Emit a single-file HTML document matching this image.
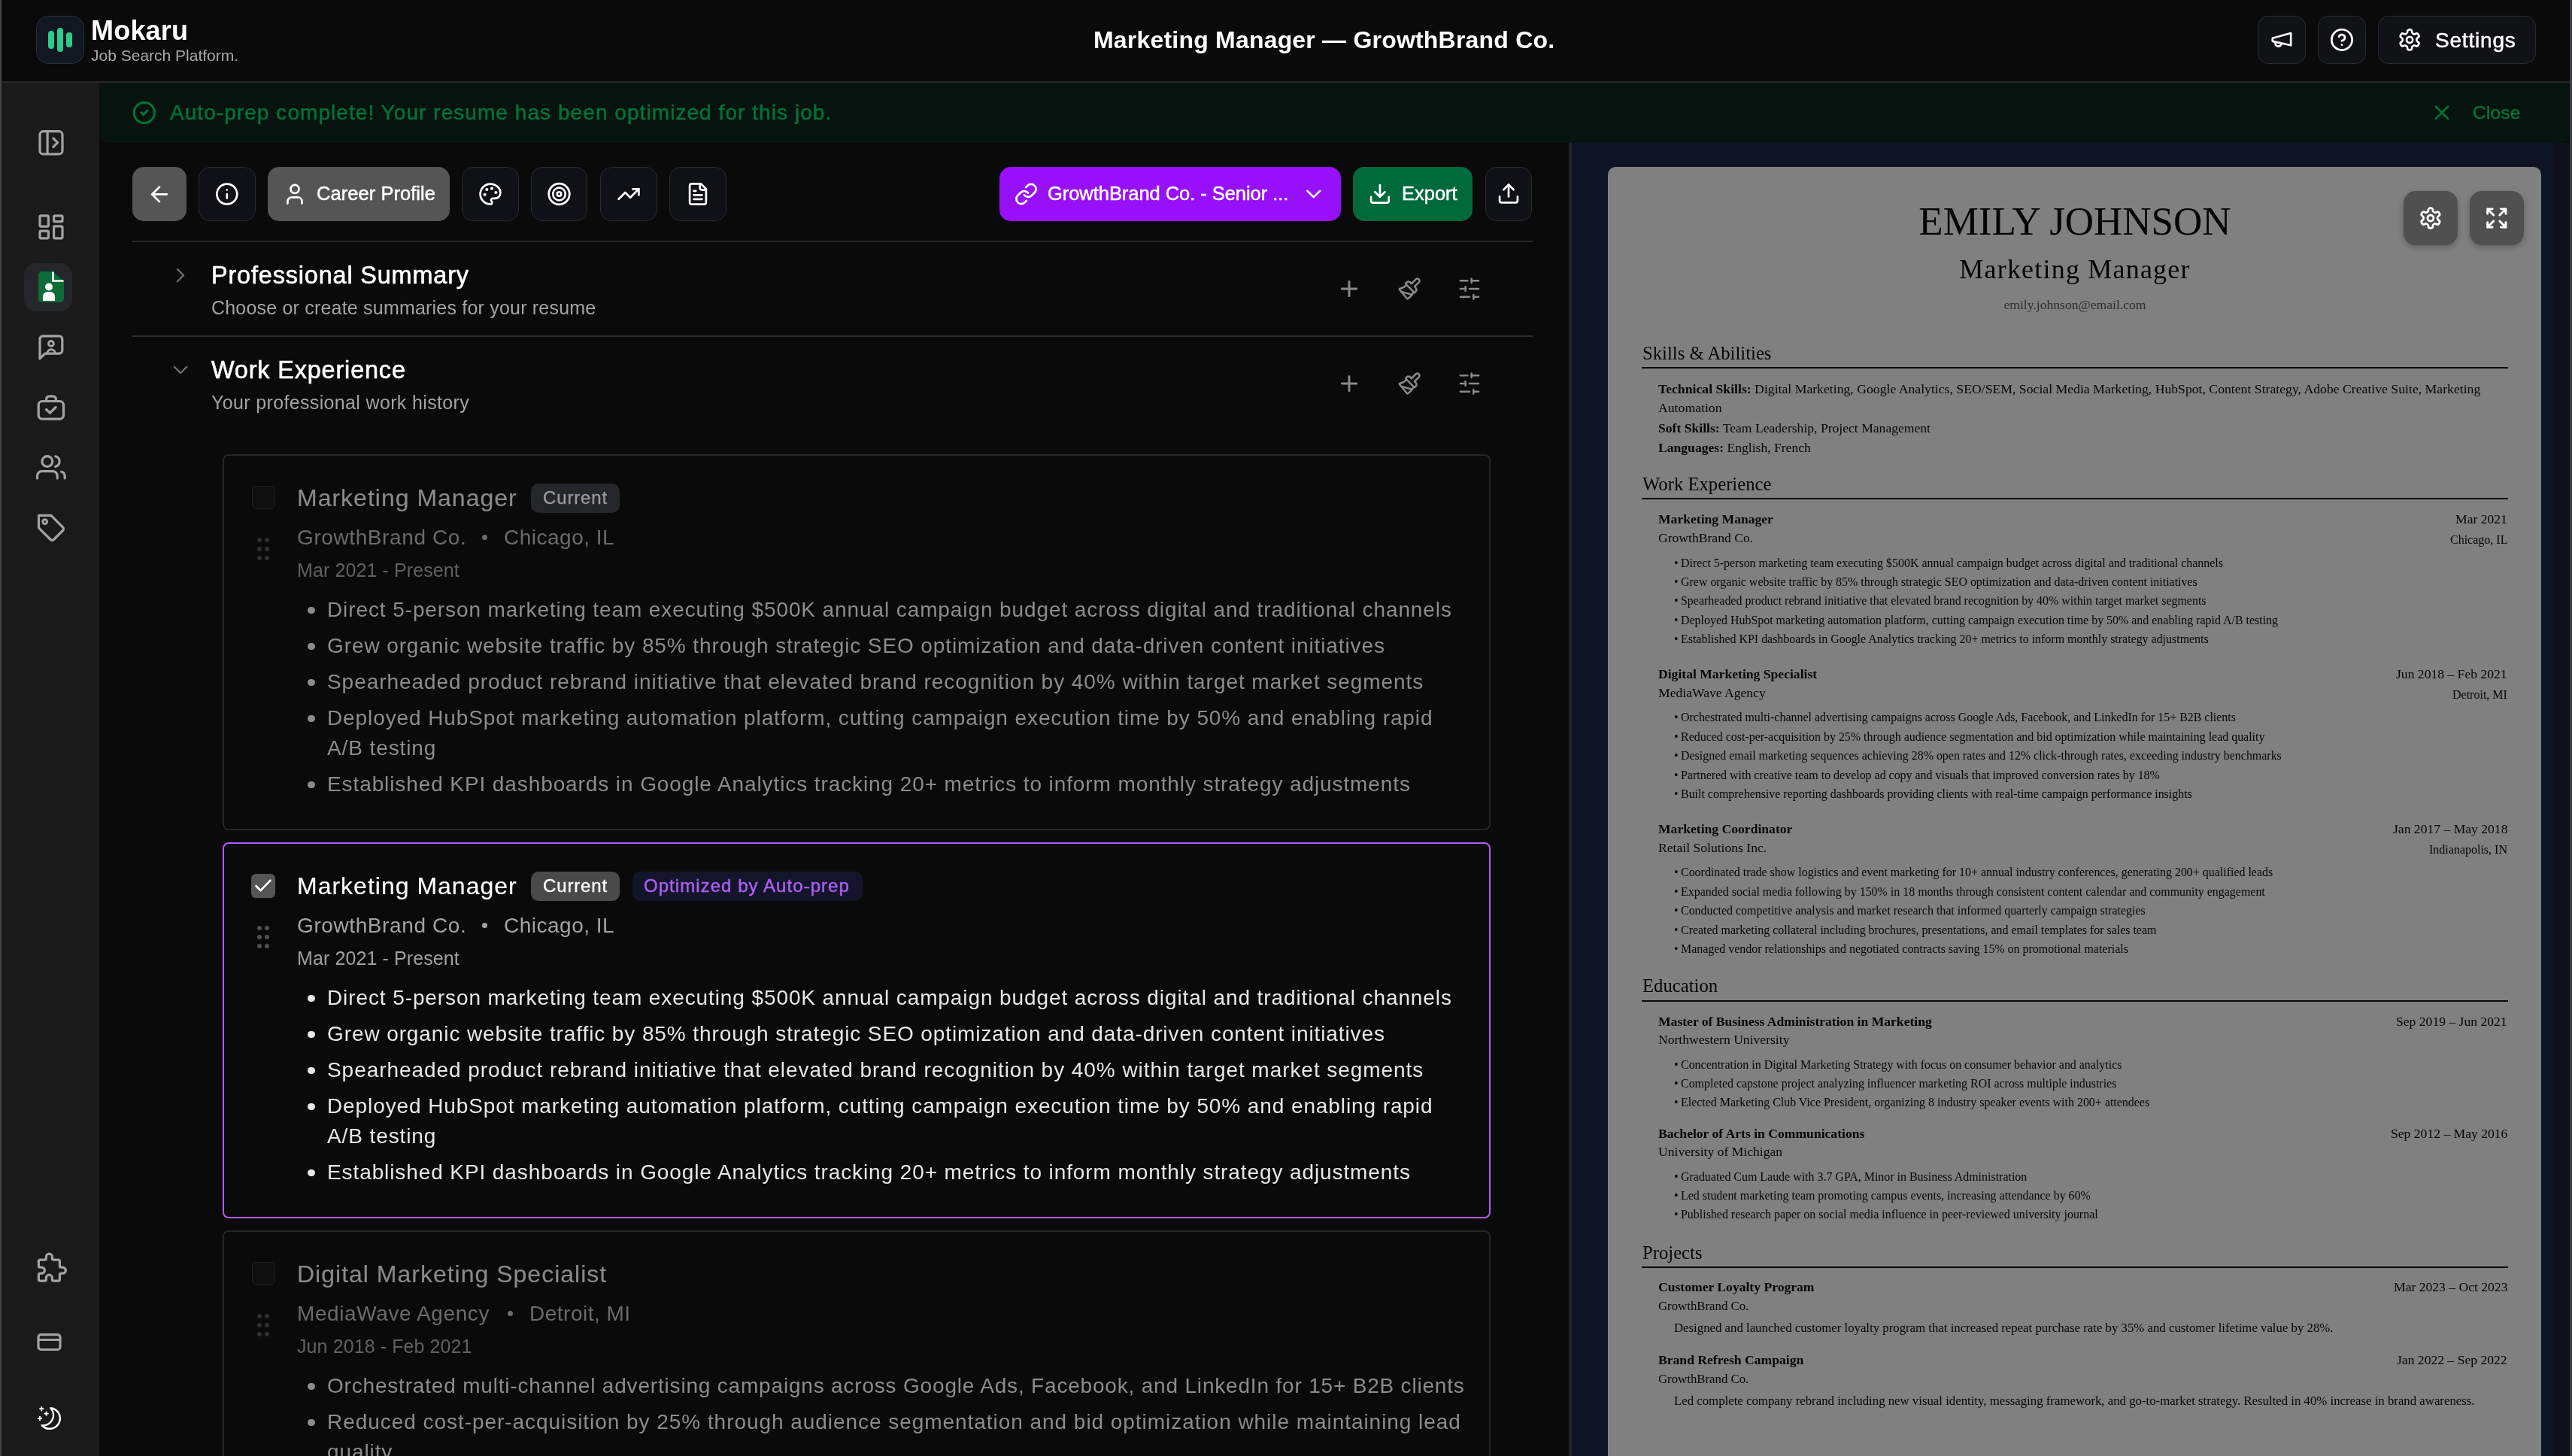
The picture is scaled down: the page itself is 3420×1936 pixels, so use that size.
<!DOCTYPE html><html><head><meta charset="utf-8"><style>
html,body{margin:0;padding:0;width:3420px;height:1936px;overflow:hidden;background:#0a0a0a;}
.t{position:absolute;white-space:nowrap;will-change:transform;}
.r{position:absolute;box-sizing:border-box;}
.i{position:absolute;overflow:visible;}
</style></head><body>
<div class="r" style="left:0px;top:0px;width:3420px;height:108px;background:#0a0a0a;border-radius:0px;"></div>
<div class="r" style="left:0px;top:108px;width:3420px;height:2px;background:#25272b;border-radius:0px;"></div>
<div class="r" style="left:2px;top:110px;width:130px;height:1826px;background:#1a1a1a;border-radius:0px;"></div>
<div class="r" style="left:132px;top:110px;width:1954px;height:1826px;background:#0a0a0a;border-radius:0px;"></div>
<div class="r" style="left:2086px;top:190px;width:4px;height:1746px;background:#232323;border-radius:0px;"></div>
<div class="r" style="left:2090px;top:190px;width:1327px;height:1746px;background:#0e1423;border-radius:0px;"></div>
<div class="r" style="left:3396px;top:190px;width:21px;height:1746px;background:#0e1119;border-radius:0px;"></div>
<div class="r" style="left:0px;top:0px;width:2px;height:1936px;background:#44464b;border-radius:0px;"></div>
<div class="r" style="left:3417px;top:0px;width:3px;height:1936px;background:#3b3d42;border-radius:0px;"></div>
<div class="r" style="left:132px;top:110px;width:3285px;height:80px;background:#07130f;border-radius:0px;border-radius:0 0 10px 10px;"></div>
<div class="r" style="left:48px;top:21px;width:64px;height:64px;background:#131722;border-radius:16px;border:1.5px solid #2c2f38;"></div>
<div class="r" style="left:64px;top:41px;width:8px;height:24px;background:#2ecb8d;border-radius:4px;"></div>
<div class="r" style="left:76px;top:37px;width:8px;height:32px;background:#2ecb8d;border-radius:4px;"></div>
<div class="r" style="left:88px;top:43px;width:8px;height:20px;background:#2ecb8d;border-radius:4px;"></div>
<div class="t" style="top:17.03px;font-family:'Liberation Sans', sans-serif;font-size:36px;line-height:47px;color:#ffffff;font-weight:700;letter-spacing:0.2px;left:121px;">Mokaru</div>
<div class="t" style="top:60.22px;font-family:'Liberation Sans', sans-serif;font-size:21px;line-height:27px;color:#a9a9a9;font-weight:400;left:121px;">Job Search Platform.</div>
<div class="t" style="top:32.41px;font-family:'Liberation Sans', sans-serif;font-size:32px;line-height:42px;color:#ffffff;font-weight:700;letter-spacing:0.2px;left:1454px;">Marketing Manager — GrowthBrand Co.</div>
<div class="r" style="left:3002px;top:21px;width:64px;height:64px;background:#111216;border-radius:14px;border:1.5px solid #2a2b2f;"></div>
<div class="r" style="left:3082px;top:21px;width:64px;height:64px;background:#111216;border-radius:14px;border:1.5px solid #2a2b2f;"></div>
<div class="r" style="left:3162px;top:21px;width:210px;height:64px;background:#111216;border-radius:14px;border:1.5px solid #2a2b2f;"></div>
<div class="t" style="top:35.60px;font-family:'Liberation Sans', sans-serif;font-size:28px;line-height:36px;color:#ffffff;font-weight:400;letter-spacing:0.8px;-webkit-text-stroke:0.5px #ffffff;left:3237.5px;">Settings</div>
<div class="r" style="left:32px;top:350px;width:64px;height:64px;background:#25262a;border-radius:16px;"></div>
<svg class="i" style="left:51px;top:361px;width:34px;height:41px" viewBox="0 0 34 41"><path d="M5 0H19L34 13V36a5 5 0 0 1-5 5H5a5 5 0 0 1-5-5V5a5 5 0 0 1 5-5z" fill="#0c6b37"/><path d="M19.5 0.5V12.5H33.5" fill="none" stroke="#fafafa" stroke-width="2.6"/><circle cx="14" cy="20.5" r="5" fill="#fafafa"/><path d="M6 39V33a6 6 0 0 1 6-6h4a6 6 0 0 1 6 6v6z" fill="#fafafa"/></svg>
<div class="t" style="top:132.30px;font-family:'Liberation Sans', sans-serif;font-size:28px;line-height:36px;color:#007339;font-weight:400;letter-spacing:1.06px;-webkit-text-stroke:0.5px #007339;left:225.5px;">Auto-prep complete! Your resume has been optimized for this job.</div>
<div class="t" style="top:133.81px;font-family:'Liberation Sans', sans-serif;font-size:24.5px;line-height:32px;color:#007339;font-weight:400;letter-spacing:0.2px;-webkit-text-stroke:0.5px #007339;left:3287.7px;">Close</div>
<div class="r" style="left:176px;top:222px;width:72px;height:72px;background:#555555;border-radius:15px;"></div>
<div class="r" style="left:264px;top:222px;width:76px;height:72px;background:#101116;border-radius:15px;border:1.5px solid #2a2b2f;"></div>
<div class="r" style="left:356px;top:222px;width:242px;height:72px;background:#555555;border-radius:15px;"></div>
<div class="t" style="top:240.66px;font-family:'Liberation Sans', sans-serif;font-size:25.5px;line-height:33px;color:#ffffff;font-weight:400;letter-spacing:0.05px;-webkit-text-stroke:0.5px #ffffff;left:420.6px;">Career Profile</div>
<div class="r" style="left:614px;top:222px;width:76px;height:72px;background:#101116;border-radius:15px;border:1.5px solid #2a2b2f;"></div>
<div class="r" style="left:706px;top:222px;width:75px;height:72px;background:#101116;border-radius:15px;border:1.5px solid #2a2b2f;"></div>
<div class="r" style="left:798px;top:222px;width:76px;height:72px;background:#101116;border-radius:15px;border:1.5px solid #2a2b2f;"></div>
<div class="r" style="left:890px;top:222px;width:76px;height:72px;background:#101116;border-radius:15px;border:1.5px solid #2a2b2f;"></div>
<div class="r" style="left:1329px;top:222px;width:454px;height:72px;background:#9810fa;border-radius:15px;"></div>
<div class="t" style="top:240.66px;font-family:'Liberation Sans', sans-serif;font-size:25.5px;line-height:33px;color:#ffffff;font-weight:400;letter-spacing:-0.05px;-webkit-text-stroke:0.5px #ffffff;left:1393px;">GrowthBrand Co. - Senior ...</div>
<div class="r" style="left:1799px;top:222px;width:159px;height:72px;background:#006a3b;border-radius:15px;"></div>
<div class="t" style="top:240.66px;font-family:'Liberation Sans', sans-serif;font-size:25.5px;line-height:33px;color:#ffffff;font-weight:400;-webkit-text-stroke:0.5px #ffffff;left:1864.4px;">Export</div>
<div class="r" style="left:1975px;top:222px;width:62px;height:72px;background:#101116;border-radius:15px;border:1.5px solid #2a2b2f;"></div>
<div class="r" style="left:176px;top:320px;width:1862px;height:2px;background:#25282c;border-radius:0px;"></div>
<div class="r" style="left:176px;top:446px;width:1862px;height:2px;background:#2b2e33;border-radius:0px;"></div>
<div class="t" style="top:344.77px;font-family:'Liberation Sans', sans-serif;font-size:32.4px;line-height:42px;color:#ffffff;font-weight:400;letter-spacing:0.85px;-webkit-text-stroke:0.6px #ffffff;left:280.8px;">Professional Summary</div>
<div class="t" style="top:393.14px;font-family:'Liberation Sans', sans-serif;font-size:25px;line-height:32px;color:#a3a3a3;font-weight:400;letter-spacing:0.2px;left:280.8px;">Choose or create summaries for your resume</div>
<div class="t" style="top:470.87px;font-family:'Liberation Sans', sans-serif;font-size:32.4px;line-height:42px;color:#ffffff;font-weight:400;letter-spacing:0.85px;-webkit-text-stroke:0.6px #ffffff;left:280.8px;">Work Experience</div>
<div class="t" style="top:519.34px;font-family:'Liberation Sans', sans-serif;font-size:25px;line-height:32px;color:#a3a3a3;font-weight:400;letter-spacing:0.35px;left:280.8px;">Your professional work history</div>
<div class="r" style="left:296px;top:604px;width:1686px;height:500px;background:transparent;border-radius:8px;border:2px solid #252629;"></div>
<div class="r" style="left:334.5px;top:646px;width:31.0px;height:31px;background:#0f0f10;border-radius:6px;border:1.5px solid #1f1f21;"></div>
<div class="t" style="top:640.91px;font-family:'Liberation Sans', sans-serif;font-size:32px;line-height:42px;color:#8a8a8a;font-weight:400;letter-spacing:1.0px;-webkit-text-stroke:0.15px #8a8a8a;left:394.8px;">Marketing Manager</div>
<div class="r" style="left:705.5px;top:642.5px;width:118.20000000000005px;height:39.0px;background:#252629;border-radius:10px;"></div>
<div class="t" style="top:646.48px;font-family:'Liberation Sans', sans-serif;font-size:24px;line-height:31px;color:#9a9a9a;font-weight:400;letter-spacing:0.85px;-webkit-text-stroke:0.35px #9a9a9a;left:721.5px;">Current</div>
<div class="t" style="top:696.70px;font-family:'Liberation Sans', sans-serif;font-size:28px;line-height:36px;color:#6b6b6b;font-weight:400;letter-spacing:0.6px;left:394.8px;">GrowthBrand Co.</div>
<div class="r" style="left:641.3000000000001px;top:711px;width:7.0px;height:7px;background:#6b6b6b;border-radius:4px;"></div>
<div class="t" style="top:696.70px;font-family:'Liberation Sans', sans-serif;font-size:28px;line-height:36px;color:#6b6b6b;font-weight:400;letter-spacing:0.5px;left:670.0000000000001px;">Chicago, IL</div>
<div class="r" style="left:342px;top:715.2px;width:6px;height:6.0px;background:#303030;border-radius:3px;"></div>
<div class="r" style="left:342px;top:727px;width:6px;height:6px;background:#303030;border-radius:3px;"></div>
<div class="r" style="left:342px;top:738.7px;width:6px;height:6.0px;background:#303030;border-radius:3px;"></div>
<div class="r" style="left:352px;top:715.2px;width:6px;height:6.0px;background:#303030;border-radius:3px;"></div>
<div class="r" style="left:352px;top:727px;width:6px;height:6px;background:#303030;border-radius:3px;"></div>
<div class="r" style="left:352px;top:738.7px;width:6px;height:6.0px;background:#303030;border-radius:3px;"></div>
<div class="t" style="top:741.74px;font-family:'Liberation Sans', sans-serif;font-size:25px;line-height:32px;color:#606060;font-weight:400;letter-spacing:0.1px;left:394.8px;">Mar 2021 - Present</div>
<div class="r" style="left:409.4px;top:806.5px;width:9.200000000000045px;height:9.200000000000045px;background:#8c8c8c;border-radius:5px;"></div>
<div class="t" style="top:792.80px;font-family:'Liberation Sans', sans-serif;font-size:28px;line-height:36px;color:#8c8c8c;font-weight:400;letter-spacing:0.9px;left:435.2px;">Direct 5-person marketing team executing $500K annual campaign budget across digital and traditional channels</div>
<div class="r" style="left:409.4px;top:854.5px;width:9.200000000000045px;height:9.200000000000045px;background:#8c8c8c;border-radius:5px;"></div>
<div class="t" style="top:840.80px;font-family:'Liberation Sans', sans-serif;font-size:28px;line-height:36px;color:#8c8c8c;font-weight:400;letter-spacing:0.9px;left:435.2px;">Grew organic website traffic by 85% through strategic SEO optimization and data-driven content initiatives</div>
<div class="r" style="left:409.4px;top:902.5px;width:9.200000000000045px;height:9.200000000000045px;background:#8c8c8c;border-radius:5px;"></div>
<div class="t" style="top:888.80px;font-family:'Liberation Sans', sans-serif;font-size:28px;line-height:36px;color:#8c8c8c;font-weight:400;letter-spacing:0.944px;left:435.2px;">Spearheaded product rebrand initiative that elevated brand recognition by 40% within target market segments</div>
<div class="r" style="left:409.4px;top:950.5px;width:9.200000000000045px;height:9.200000000000045px;background:#8c8c8c;border-radius:5px;"></div>
<div class="t" style="top:936.80px;font-family:'Liberation Sans', sans-serif;font-size:28px;line-height:36px;color:#8c8c8c;font-weight:400;letter-spacing:0.9px;left:435.2px;">Deployed HubSpot marketing automation platform, cutting campaign execution time by 50% and enabling rapid</div>
<div class="t" style="top:976.80px;font-family:'Liberation Sans', sans-serif;font-size:28px;line-height:36px;color:#8c8c8c;font-weight:400;letter-spacing:0.9px;left:435.2px;">A/B testing</div>
<div class="r" style="left:409.4px;top:1038.5px;width:9.200000000000045px;height:9.200000000000045px;background:#8c8c8c;border-radius:5px;"></div>
<div class="t" style="top:1024.80px;font-family:'Liberation Sans', sans-serif;font-size:28px;line-height:36px;color:#8c8c8c;font-weight:400;letter-spacing:0.9px;left:435.2px;">Established KPI dashboards in Google Analytics tracking 20+ metrics to inform monthly strategy adjustments</div>
<div class="r" style="left:296px;top:1120px;width:1686px;height:500px;background:transparent;border-radius:8px;border:2px solid #b25cfa;"></div>
<div class="r" style="left:334px;top:1162px;width:32px;height:32px;background:#555555;border-radius:6px;"></div>
<div class="t" style="top:1156.91px;font-family:'Liberation Sans', sans-serif;font-size:32px;line-height:42px;color:#ffffff;font-weight:400;letter-spacing:1.0px;-webkit-text-stroke:0.15px #ffffff;left:394.8px;">Marketing Manager</div>
<div class="r" style="left:705.5px;top:1158.5px;width:118.20000000000005px;height:39.0px;background:#4a4a4a;border-radius:10px;"></div>
<div class="t" style="top:1162.48px;font-family:'Liberation Sans', sans-serif;font-size:24px;line-height:31px;color:#ffffff;font-weight:400;letter-spacing:0.85px;-webkit-text-stroke:0.35px #ffffff;left:721.5px;">Current</div>
<div class="r" style="left:840.5px;top:1158.5px;width:306.20000000000005px;height:39.0px;background:#14152a;border-radius:10px;"></div>
<div class="t" style="top:1162.48px;font-family:'Liberation Sans', sans-serif;font-size:24px;line-height:31px;color:#ad5ff5;font-weight:400;letter-spacing:1.05px;-webkit-text-stroke:0.45px #ad5ff5;left:855.9px;">Optimized by Auto-prep</div>
<div class="t" style="top:1212.70px;font-family:'Liberation Sans', sans-serif;font-size:28px;line-height:36px;color:#a3a3a3;font-weight:400;letter-spacing:0.6px;left:394.8px;">GrowthBrand Co.</div>
<div class="r" style="left:641.3000000000001px;top:1227px;width:7.0px;height:7px;background:#a3a3a3;border-radius:4px;"></div>
<div class="t" style="top:1212.70px;font-family:'Liberation Sans', sans-serif;font-size:28px;line-height:36px;color:#a3a3a3;font-weight:400;letter-spacing:0.5px;left:670.0000000000001px;">Chicago, IL</div>
<div class="r" style="left:342px;top:1231.2px;width:6px;height:6.0px;background:#505050;border-radius:3px;"></div>
<div class="r" style="left:342px;top:1243px;width:6px;height:6px;background:#505050;border-radius:3px;"></div>
<div class="r" style="left:342px;top:1254.7px;width:6px;height:6.0px;background:#505050;border-radius:3px;"></div>
<div class="r" style="left:352px;top:1231.2px;width:6px;height:6.0px;background:#505050;border-radius:3px;"></div>
<div class="r" style="left:352px;top:1243px;width:6px;height:6px;background:#505050;border-radius:3px;"></div>
<div class="r" style="left:352px;top:1254.7px;width:6px;height:6.0px;background:#505050;border-radius:3px;"></div>
<div class="t" style="top:1257.74px;font-family:'Liberation Sans', sans-serif;font-size:25px;line-height:32px;color:#a0a0a0;font-weight:400;letter-spacing:0.1px;left:394.8px;">Mar 2021 - Present</div>
<div class="r" style="left:409.4px;top:1322.5px;width:9.200000000000045px;height:9.200000000000045px;background:#e8e8e8;border-radius:5px;"></div>
<div class="t" style="top:1308.80px;font-family:'Liberation Sans', sans-serif;font-size:28px;line-height:36px;color:#e8e8e8;font-weight:400;letter-spacing:0.9px;left:435.2px;">Direct 5-person marketing team executing $500K annual campaign budget across digital and traditional channels</div>
<div class="r" style="left:409.4px;top:1370.5px;width:9.200000000000045px;height:9.200000000000045px;background:#e8e8e8;border-radius:5px;"></div>
<div class="t" style="top:1356.80px;font-family:'Liberation Sans', sans-serif;font-size:28px;line-height:36px;color:#e8e8e8;font-weight:400;letter-spacing:0.9px;left:435.2px;">Grew organic website traffic by 85% through strategic SEO optimization and data-driven content initiatives</div>
<div class="r" style="left:409.4px;top:1418.5px;width:9.200000000000045px;height:9.200000000000045px;background:#e8e8e8;border-radius:5px;"></div>
<div class="t" style="top:1404.80px;font-family:'Liberation Sans', sans-serif;font-size:28px;line-height:36px;color:#e8e8e8;font-weight:400;letter-spacing:0.944px;left:435.2px;">Spearheaded product rebrand initiative that elevated brand recognition by 40% within target market segments</div>
<div class="r" style="left:409.4px;top:1466.5px;width:9.200000000000045px;height:9.200000000000045px;background:#e8e8e8;border-radius:5px;"></div>
<div class="t" style="top:1452.80px;font-family:'Liberation Sans', sans-serif;font-size:28px;line-height:36px;color:#e8e8e8;font-weight:400;letter-spacing:0.9px;left:435.2px;">Deployed HubSpot marketing automation platform, cutting campaign execution time by 50% and enabling rapid</div>
<div class="t" style="top:1492.80px;font-family:'Liberation Sans', sans-serif;font-size:28px;line-height:36px;color:#e8e8e8;font-weight:400;letter-spacing:0.9px;left:435.2px;">A/B testing</div>
<div class="r" style="left:409.4px;top:1554.5px;width:9.200000000000045px;height:9.200000000000045px;background:#e8e8e8;border-radius:5px;"></div>
<div class="t" style="top:1540.80px;font-family:'Liberation Sans', sans-serif;font-size:28px;line-height:36px;color:#e8e8e8;font-weight:400;letter-spacing:0.9px;left:435.2px;">Established KPI dashboards in Google Analytics tracking 20+ metrics to inform monthly strategy adjustments</div>
<div class="r" style="left:296px;top:1636px;width:1686px;height:564px;background:transparent;border-radius:8px;border:2px solid #252629;"></div>
<div class="r" style="left:334.5px;top:1678px;width:31.0px;height:31px;background:#0f0f10;border-radius:6px;border:1.5px solid #1f1f21;"></div>
<div class="t" style="top:1672.91px;font-family:'Liberation Sans', sans-serif;font-size:32px;line-height:42px;color:#8a8a8a;font-weight:400;letter-spacing:1.0px;-webkit-text-stroke:0.15px #8a8a8a;left:394.8px;">Digital Marketing Specialist</div>
<div class="t" style="top:1728.70px;font-family:'Liberation Sans', sans-serif;font-size:28px;line-height:36px;color:#6b6b6b;font-weight:400;letter-spacing:0.6px;left:394.8px;">MediaWave Agency</div>
<div class="r" style="left:675.4000000000001px;top:1743px;width:7.0px;height:7px;background:#6b6b6b;border-radius:4px;"></div>
<div class="t" style="top:1728.70px;font-family:'Liberation Sans', sans-serif;font-size:28px;line-height:36px;color:#6b6b6b;font-weight:400;letter-spacing:0.5px;left:704.1000000000001px;">Detroit, MI</div>
<div class="r" style="left:342px;top:1747.2px;width:6px;height:6.0px;background:#303030;border-radius:3px;"></div>
<div class="r" style="left:342px;top:1759px;width:6px;height:6px;background:#303030;border-radius:3px;"></div>
<div class="r" style="left:342px;top:1770.7px;width:6px;height:6.0px;background:#303030;border-radius:3px;"></div>
<div class="r" style="left:352px;top:1747.2px;width:6px;height:6.0px;background:#303030;border-radius:3px;"></div>
<div class="r" style="left:352px;top:1759px;width:6px;height:6px;background:#303030;border-radius:3px;"></div>
<div class="r" style="left:352px;top:1770.7px;width:6px;height:6.0px;background:#303030;border-radius:3px;"></div>
<div class="t" style="top:1773.74px;font-family:'Liberation Sans', sans-serif;font-size:25px;line-height:32px;color:#606060;font-weight:400;letter-spacing:0.1px;left:394.8px;">Jun 2018 - Feb 2021</div>
<div class="r" style="left:409.4px;top:1838.5px;width:9.200000000000045px;height:9.200000000000045px;background:#8c8c8c;border-radius:5px;"></div>
<div class="t" style="top:1824.80px;font-family:'Liberation Sans', sans-serif;font-size:28px;line-height:36px;color:#8c8c8c;font-weight:400;letter-spacing:0.812px;left:435.2px;">Orchestrated multi-channel advertising campaigns across Google Ads, Facebook, and LinkedIn for 15+ B2B clients</div>
<div class="r" style="left:409.4px;top:1886.5px;width:9.200000000000045px;height:9.200000000000045px;background:#8c8c8c;border-radius:5px;"></div>
<div class="t" style="top:1872.80px;font-family:'Liberation Sans', sans-serif;font-size:28px;line-height:36px;color:#8c8c8c;font-weight:400;letter-spacing:0.953px;left:435.2px;">Reduced cost-per-acquisition by 25% through audience segmentation and bid optimization while maintaining lead</div>
<div class="t" style="top:1912.80px;font-family:'Liberation Sans', sans-serif;font-size:28px;line-height:36px;color:#8c8c8c;font-weight:400;letter-spacing:0.9px;left:435.2px;">quality</div>
<div class="r" style="left:2138px;top:222px;width:1241px;height:2178px;background:#808080;border-radius:10px;"></div>
<div class="t" style="top:259.81px;font-family:'Liberation Serif', serif;font-size:53px;line-height:69px;color:#050505;font-weight:400;left:1258.5px;width:3000px;text-align:center;">EMILY JOHNSON</div>
<div class="t" style="top:334.75px;font-family:'Liberation Serif', serif;font-size:36px;line-height:47px;color:#050505;font-weight:400;letter-spacing:1.2px;left:1259.1px;width:3000px;text-align:center;">Marketing Manager</div>
<div class="t" style="top:393.96px;font-family:'Liberation Serif', serif;font-size:17.6px;line-height:23px;color:#2e2e2e;font-weight:400;left:1258.5px;width:3000px;text-align:center;">emily.johnson@email.com</div>
<div class="r" style="left:3196px;top:254px;width:72px;height:72px;background:#505050;border-radius:16px;box-shadow:0 3px 8px rgba(0,0,0,0.25);"></div>
<div class="r" style="left:3284px;top:254px;width:72px;height:72px;background:#505050;border-radius:16px;box-shadow:0 3px 8px rgba(0,0,0,0.25);"></div>
<div class="t" style="top:453.66px;font-family:'Liberation Serif', serif;font-size:24.7px;line-height:32px;color:#050505;font-weight:400;left:2183.6px;">Skills &amp; Abilities</div>
<div class="r" style="left:2183px;top:488px;width:1151.5px;height:2px;background:#0a0a0a;border-radius:0px;"></div>
<div class="t" style="top:506.33px;font-family:'Liberation Serif', serif;font-size:17.7px;line-height:23px;color:#050505;font-weight:400;left:2204.8px;"><b>Technical Skills:</b> Digital Marketing, Google Analytics, SEO/SEM, Social Media Marketing, HubSpot, Content Strategy, Adobe Creative Suite, Marketing</div>
<div class="t" style="top:530.73px;font-family:'Liberation Serif', serif;font-size:17.7px;line-height:23px;color:#050505;font-weight:400;left:2204.8px;">Automation</div>
<div class="t" style="top:557.66px;font-family:'Liberation Serif', serif;font-size:17.6px;line-height:23px;color:#050505;font-weight:400;left:2204.8px;"><b>Soft Skills:</b> Team Leadership, Project Management</div>
<div class="t" style="top:583.76px;font-family:'Liberation Serif', serif;font-size:17.6px;line-height:23px;color:#050505;font-weight:400;left:2204.8px;"><b>Languages:</b> English, French</div>
<div class="t" style="top:627.66px;font-family:'Liberation Serif', serif;font-size:24.7px;line-height:32px;color:#050505;font-weight:400;left:2183.6px;">Work Experience</div>
<div class="r" style="left:2183px;top:662px;width:1151.5px;height:2px;background:#0a0a0a;border-radius:0px;"></div>
<div class="t" style="top:679.36px;font-family:'Liberation Serif', serif;font-size:17.6px;line-height:23px;color:#050505;font-weight:700;left:2204.8px;">Marketing Manager</div>
<div class="t" style="top:679.36px;font-family:'Liberation Serif', serif;font-size:17.6px;line-height:23px;color:#050505;font-weight:400;right:86px;text-align:right;">Mar 2021</div>
<div class="t" style="top:704.36px;font-family:'Liberation Serif', serif;font-size:17.6px;line-height:23px;color:#050505;font-weight:400;left:2204.8px;">GrowthBrand Co.</div>
<div class="t" style="top:707.20px;font-family:'Liberation Serif', serif;font-size:16px;line-height:21px;color:#050505;font-weight:400;right:86px;text-align:right;">Chicago, IL</div>
<div class="t" style="top:737.50px;font-family:'Liberation Serif', serif;font-size:16px;line-height:21px;color:#050505;font-weight:400;left:2226px;">•</div>
<div class="t" style="top:737.52px;font-family:'Liberation Serif', serif;font-size:15.94px;line-height:21px;color:#050505;font-weight:400;left:2234.9px;">Direct 5-person marketing team executing $500K annual campaign budget across digital and traditional channels</div>
<div class="t" style="top:762.90px;font-family:'Liberation Serif', serif;font-size:16px;line-height:21px;color:#050505;font-weight:400;left:2226px;">•</div>
<div class="t" style="top:762.92px;font-family:'Liberation Serif', serif;font-size:15.94px;line-height:21px;color:#050505;font-weight:400;left:2234.9px;">Grew organic website traffic by 85% through strategic SEO optimization and data-driven content initiatives</div>
<div class="t" style="top:788.30px;font-family:'Liberation Serif', serif;font-size:16px;line-height:21px;color:#050505;font-weight:400;left:2226px;">•</div>
<div class="t" style="top:788.32px;font-family:'Liberation Serif', serif;font-size:15.94px;line-height:21px;color:#050505;font-weight:400;left:2234.9px;">Spearheaded product rebrand initiative that elevated brand recognition by 40% within target market segments</div>
<div class="t" style="top:813.70px;font-family:'Liberation Serif', serif;font-size:16px;line-height:21px;color:#050505;font-weight:400;left:2226px;">•</div>
<div class="t" style="top:813.72px;font-family:'Liberation Serif', serif;font-size:15.94px;line-height:21px;color:#050505;font-weight:400;left:2234.9px;">Deployed HubSpot marketing automation platform, cutting campaign execution time by 50% and enabling rapid A/B testing</div>
<div class="t" style="top:839.10px;font-family:'Liberation Serif', serif;font-size:16px;line-height:21px;color:#050505;font-weight:400;left:2226px;">•</div>
<div class="t" style="top:839.12px;font-family:'Liberation Serif', serif;font-size:15.94px;line-height:21px;color:#050505;font-weight:400;left:2234.9px;">Established KPI dashboards in Google Analytics tracking 20+ metrics to inform monthly strategy adjustments</div>
<div class="t" style="top:885.16px;font-family:'Liberation Serif', serif;font-size:17.6px;line-height:23px;color:#050505;font-weight:700;left:2204.8px;">Digital Marketing Specialist</div>
<div class="t" style="top:885.16px;font-family:'Liberation Serif', serif;font-size:17.6px;line-height:23px;color:#050505;font-weight:400;right:86px;text-align:right;">Jun 2018 – Feb 2021</div>
<div class="t" style="top:910.16px;font-family:'Liberation Serif', serif;font-size:17.6px;line-height:23px;color:#050505;font-weight:400;left:2204.8px;">MediaWave Agency</div>
<div class="t" style="top:913.00px;font-family:'Liberation Serif', serif;font-size:16px;line-height:21px;color:#050505;font-weight:400;right:86px;text-align:right;">Detroit, MI</div>
<div class="t" style="top:943.30px;font-family:'Liberation Serif', serif;font-size:16px;line-height:21px;color:#050505;font-weight:400;left:2226px;">•</div>
<div class="t" style="top:943.32px;font-family:'Liberation Serif', serif;font-size:15.94px;line-height:21px;color:#050505;font-weight:400;left:2234.9px;">Orchestrated multi-channel advertising campaigns across Google Ads, Facebook, and LinkedIn for 15+ B2B clients</div>
<div class="t" style="top:968.70px;font-family:'Liberation Serif', serif;font-size:16px;line-height:21px;color:#050505;font-weight:400;left:2226px;">•</div>
<div class="t" style="top:968.72px;font-family:'Liberation Serif', serif;font-size:15.94px;line-height:21px;color:#050505;font-weight:400;left:2234.9px;">Reduced cost-per-acquisition by 25% through audience segmentation and bid optimization while maintaining lead quality</div>
<div class="t" style="top:994.10px;font-family:'Liberation Serif', serif;font-size:16px;line-height:21px;color:#050505;font-weight:400;left:2226px;">•</div>
<div class="t" style="top:994.12px;font-family:'Liberation Serif', serif;font-size:15.94px;line-height:21px;color:#050505;font-weight:400;left:2234.9px;">Designed email marketing sequences achieving 28% open rates and 12% click-through rates, exceeding industry benchmarks</div>
<div class="t" style="top:1019.50px;font-family:'Liberation Serif', serif;font-size:16px;line-height:21px;color:#050505;font-weight:400;left:2226px;">•</div>
<div class="t" style="top:1019.52px;font-family:'Liberation Serif', serif;font-size:15.94px;line-height:21px;color:#050505;font-weight:400;left:2234.9px;">Partnered with creative team to develop ad copy and visuals that improved conversion rates by 18%</div>
<div class="t" style="top:1044.90px;font-family:'Liberation Serif', serif;font-size:16px;line-height:21px;color:#050505;font-weight:400;left:2226px;">•</div>
<div class="t" style="top:1044.92px;font-family:'Liberation Serif', serif;font-size:15.94px;line-height:21px;color:#050505;font-weight:400;left:2234.9px;">Built comprehensive reporting dashboards providing clients with real-time campaign performance insights</div>
<div class="t" style="top:1091.16px;font-family:'Liberation Serif', serif;font-size:17.6px;line-height:23px;color:#050505;font-weight:700;left:2204.8px;">Marketing Coordinator</div>
<div class="t" style="top:1091.16px;font-family:'Liberation Serif', serif;font-size:17.6px;line-height:23px;color:#050505;font-weight:400;right:86px;text-align:right;">Jan 2017 – May 2018</div>
<div class="t" style="top:1116.16px;font-family:'Liberation Serif', serif;font-size:17.6px;line-height:23px;color:#050505;font-weight:400;left:2204.8px;">Retail Solutions Inc.</div>
<div class="t" style="top:1119.00px;font-family:'Liberation Serif', serif;font-size:16px;line-height:21px;color:#050505;font-weight:400;right:86px;text-align:right;">Indianapolis, IN</div>
<div class="t" style="top:1149.30px;font-family:'Liberation Serif', serif;font-size:16px;line-height:21px;color:#050505;font-weight:400;left:2226px;">•</div>
<div class="t" style="top:1149.32px;font-family:'Liberation Serif', serif;font-size:15.94px;line-height:21px;color:#050505;font-weight:400;left:2234.9px;">Coordinated trade show logistics and event marketing for 10+ annual industry conferences, generating 200+ qualified leads</div>
<div class="t" style="top:1174.70px;font-family:'Liberation Serif', serif;font-size:16px;line-height:21px;color:#050505;font-weight:400;left:2226px;">•</div>
<div class="t" style="top:1174.72px;font-family:'Liberation Serif', serif;font-size:15.94px;line-height:21px;color:#050505;font-weight:400;left:2234.9px;">Expanded social media following by 150% in 18 months through consistent content calendar and community engagement</div>
<div class="t" style="top:1200.10px;font-family:'Liberation Serif', serif;font-size:16px;line-height:21px;color:#050505;font-weight:400;left:2226px;">•</div>
<div class="t" style="top:1200.12px;font-family:'Liberation Serif', serif;font-size:15.94px;line-height:21px;color:#050505;font-weight:400;left:2234.9px;">Conducted competitive analysis and market research that informed quarterly campaign strategies</div>
<div class="t" style="top:1225.50px;font-family:'Liberation Serif', serif;font-size:16px;line-height:21px;color:#050505;font-weight:400;left:2226px;">•</div>
<div class="t" style="top:1225.52px;font-family:'Liberation Serif', serif;font-size:15.94px;line-height:21px;color:#050505;font-weight:400;left:2234.9px;">Created marketing collateral including brochures, presentations, and email templates for sales team</div>
<div class="t" style="top:1250.90px;font-family:'Liberation Serif', serif;font-size:16px;line-height:21px;color:#050505;font-weight:400;left:2226px;">•</div>
<div class="t" style="top:1250.92px;font-family:'Liberation Serif', serif;font-size:15.94px;line-height:21px;color:#050505;font-weight:400;left:2234.9px;">Managed vendor relationships and negotiated contracts saving 15% on promotional materials</div>
<div class="t" style="top:1295.36px;font-family:'Liberation Serif', serif;font-size:24.7px;line-height:32px;color:#050505;font-weight:400;left:2183.6px;">Education</div>
<div class="r" style="left:2183px;top:1329.7px;width:1151.5px;height:2.0px;background:#0a0a0a;border-radius:0px;"></div>
<div class="t" style="top:1346.56px;font-family:'Liberation Serif', serif;font-size:17.6px;line-height:23px;color:#050505;font-weight:700;left:2204.8px;">Master of Business Administration in Marketing</div>
<div class="t" style="top:1346.56px;font-family:'Liberation Serif', serif;font-size:17.6px;line-height:23px;color:#050505;font-weight:400;right:86px;text-align:right;">Sep 2019 – Jun 2021</div>
<div class="t" style="top:1371.06px;font-family:'Liberation Serif', serif;font-size:17.6px;line-height:23px;color:#050505;font-weight:400;left:2204.8px;">Northwestern University</div>
<div class="t" style="top:1404.90px;font-family:'Liberation Serif', serif;font-size:16px;line-height:21px;color:#050505;font-weight:400;left:2226px;">•</div>
<div class="t" style="top:1404.92px;font-family:'Liberation Serif', serif;font-size:15.94px;line-height:21px;color:#050505;font-weight:400;left:2234.9px;">Concentration in Digital Marketing Strategy with focus on consumer behavior and analytics</div>
<div class="t" style="top:1429.90px;font-family:'Liberation Serif', serif;font-size:16px;line-height:21px;color:#050505;font-weight:400;left:2226px;">•</div>
<div class="t" style="top:1429.92px;font-family:'Liberation Serif', serif;font-size:15.94px;line-height:21px;color:#050505;font-weight:400;left:2234.9px;">Completed capstone project analyzing influencer marketing ROI across multiple industries</div>
<div class="t" style="top:1454.90px;font-family:'Liberation Serif', serif;font-size:16px;line-height:21px;color:#050505;font-weight:400;left:2226px;">•</div>
<div class="t" style="top:1454.92px;font-family:'Liberation Serif', serif;font-size:15.94px;line-height:21px;color:#050505;font-weight:400;left:2234.9px;">Elected Marketing Club Vice President, organizing 8 industry speaker events with 200+ attendees</div>
<div class="t" style="top:1495.86px;font-family:'Liberation Serif', serif;font-size:17.6px;line-height:23px;color:#050505;font-weight:700;left:2204.8px;">Bachelor of Arts in Communications</div>
<div class="t" style="top:1495.86px;font-family:'Liberation Serif', serif;font-size:17.6px;line-height:23px;color:#050505;font-weight:400;right:86px;text-align:right;">Sep 2012 – May 2016</div>
<div class="t" style="top:1520.36px;font-family:'Liberation Serif', serif;font-size:17.6px;line-height:23px;color:#050505;font-weight:400;left:2204.8px;">University of Michigan</div>
<div class="t" style="top:1554.20px;font-family:'Liberation Serif', serif;font-size:16px;line-height:21px;color:#050505;font-weight:400;left:2226px;">•</div>
<div class="t" style="top:1554.22px;font-family:'Liberation Serif', serif;font-size:15.94px;line-height:21px;color:#050505;font-weight:400;left:2234.9px;">Graduated Cum Laude with 3.7 GPA, Minor in Business Administration</div>
<div class="t" style="top:1579.20px;font-family:'Liberation Serif', serif;font-size:16px;line-height:21px;color:#050505;font-weight:400;left:2226px;">•</div>
<div class="t" style="top:1579.22px;font-family:'Liberation Serif', serif;font-size:15.94px;line-height:21px;color:#050505;font-weight:400;left:2234.9px;">Led student marketing team promoting campus events, increasing attendance by 60%</div>
<div class="t" style="top:1604.20px;font-family:'Liberation Serif', serif;font-size:16px;line-height:21px;color:#050505;font-weight:400;left:2226px;">•</div>
<div class="t" style="top:1604.22px;font-family:'Liberation Serif', serif;font-size:15.94px;line-height:21px;color:#050505;font-weight:400;left:2234.9px;">Published research paper on social media influence in peer-reviewed university journal</div>
<div class="t" style="top:1649.66px;font-family:'Liberation Serif', serif;font-size:24.7px;line-height:32px;color:#050505;font-weight:400;left:2183.6px;">Projects</div>
<div class="r" style="left:2183px;top:1684px;width:1151.5px;height:2px;background:#0a0a0a;border-radius:0px;"></div>
<div class="t" style="top:1700.46px;font-family:'Liberation Serif', serif;font-size:17.6px;line-height:23px;color:#050505;font-weight:700;left:2204.8px;">Customer Loyalty Program</div>
<div class="t" style="top:1700.46px;font-family:'Liberation Serif', serif;font-size:17.6px;line-height:23px;color:#050505;font-weight:400;right:86px;text-align:right;">Mar 2023 – Oct 2023</div>
<div class="t" style="top:1726.03px;font-family:'Liberation Serif', serif;font-size:16.8px;line-height:22px;color:#050505;font-weight:400;left:2204.8px;">GrowthBrand Co.</div>
<div class="t" style="top:1754.83px;font-family:'Liberation Serif', serif;font-size:16.8px;line-height:22px;color:#050505;font-weight:400;left:2225.7px;">Designed and launched customer loyalty program that increased repeat purchase rate by 35% and customer lifetime value by 28%.</div>
<div class="t" style="top:1797.26px;font-family:'Liberation Serif', serif;font-size:17.6px;line-height:23px;color:#050505;font-weight:700;left:2204.8px;">Brand Refresh Campaign</div>
<div class="t" style="top:1797.26px;font-family:'Liberation Serif', serif;font-size:17.6px;line-height:23px;color:#050505;font-weight:400;right:86px;text-align:right;">Jan 2022 – Sep 2022</div>
<div class="t" style="top:1822.83px;font-family:'Liberation Serif', serif;font-size:16.8px;line-height:22px;color:#050505;font-weight:400;left:2204.8px;">GrowthBrand Co.</div>
<div class="t" style="top:1851.63px;font-family:'Liberation Serif', serif;font-size:16.8px;line-height:22px;color:#050505;font-weight:400;left:2225.7px;">Led complete company rebrand including new visual identity, messaging framework, and go-to-market strategy. Resulted in 40% increase in brand awareness.</div>
<svg style="position:absolute;left:0;top:0;width:3420px;height:1936px;overflow:visible" viewBox="0 0 3420 1936"><g transform="translate(3017.74,35.90) scale(1.3550)" style="color:#ffffff" fill="none" stroke="#ffffff" stroke-width="1.993" stroke-linecap="round" stroke-linejoin="round" ><path d="m3 11 18-5v12L3 14v-3z"/><path d="M11.6 16.8a3 3 0 1 1-5.8-1.6"/></g><g transform="translate(3097.63,36.53) scale(1.3640)" style="color:#ffffff" fill="none" stroke="#ffffff" stroke-width="1.979" stroke-linecap="round" stroke-linejoin="round" ><circle cx="12" cy="12" r="10"/><path d="M9.09 9a3 3 0 0 1 5.83 1c0 2-3 3-3 3"/><path d="M12 17h.01"/></g><g transform="translate(3187.83,36.63) scale(1.3560)" style="color:#ffffff" fill="none" stroke="#ffffff" stroke-width="1.991" stroke-linecap="round" stroke-linejoin="round" ><path d="M12.22 2h-.44a2 2 0 0 0-2 2v.18a2 2 0 0 1-1 1.73l-.43.25a2 2 0 0 1-2 0l-.15-.08a2 2 0 0 0-2.73.73l-.22.38a2 2 0 0 0 .73 2.73l.15.1a2 2 0 0 1 1 1.72v.51a2 2 0 0 1-1 1.74l-.15.09a2 2 0 0 0-.73 2.73l.22.38a2 2 0 0 0 2.73.73l.15-.08a2 2 0 0 1 2 0l.43.25a2 2 0 0 1 1 1.73V20a2 2 0 0 0 2 2h.44a2 2 0 0 0 2-2v-.18a2 2 0 0 1 1-1.73l.43-.25a2 2 0 0 1 2 0l.15.08a2 2 0 0 0 2.73-.73l.22-.39a2 2 0 0 0-.73-2.73l-.15-.08a2 2 0 0 1-1-1.74v-.5a2 2 0 0 1 1-1.74l.15-.09a2 2 0 0 0 .73-2.73l-.22-.38a2 2 0 0 0-2.73-.73l-.15.08a2 2 0 0 1-2 0l-.43-.25a2 2 0 0 1-1-1.73V4a2 2 0 0 0-2-2z"/><circle cx="12" cy="12" r="3"/></g><path d="M57.5 174.7H78.5A4.5 4.5 0 0 1 83 179.2V200.4A4.5 4.5 0 0 1 78.5 204.9H57.5A4.5 4.5 0 0 1 53 200.4V179.2A4.5 4.5 0 0 1 57.5 174.7Z M63.1 174.7V204.9 M70.9 183.9L76.6 189.6L70.9 195.3" fill="none" stroke="#a3a3a3" stroke-width="3.2" stroke-linecap="round" stroke-linejoin="round" /><path d="M54.5 286.8H62.9A1.5 1.5 0 0 1 64.4 288.3V299.6A1.5 1.5 0 0 1 62.9 301.1H54.5A1.5 1.5 0 0 1 53 299.6V288.3A1.5 1.5 0 0 1 54.5 286.8Z M54.5 307.2H62.9A1.5 1.5 0 0 1 64.4 308.7V315.3A1.5 1.5 0 0 1 62.9 316.8H54.5A1.5 1.5 0 0 1 53 315.3V308.7A1.5 1.5 0 0 1 54.5 307.2Z M73.1 286.8H81.5A1.5 1.5 0 0 1 83 288.3V293.2A1.5 1.5 0 0 1 81.5 294.7H73.1A1.5 1.5 0 0 1 71.6 293.2V288.3A1.5 1.5 0 0 1 73.1 286.8Z M73.1 300.8H81.5A1.5 1.5 0 0 1 83 302.3V315.3A1.5 1.5 0 0 1 81.5 316.8H73.1A1.5 1.5 0 0 1 71.6 315.3V302.3A1.5 1.5 0 0 1 73.1 300.8Z" fill="none" stroke="#a3a3a3" stroke-width="3.2" stroke-linecap="round" stroke-linejoin="round" stroke-linejoin="miter"/><path d="M53 477V450.8A4 4 0 0 1 57 446.8H78.8A4 4 0 0 1 82.8 450.8V466.1A4 4 0 0 1 78.8 470.1H59.7Z" fill="none" stroke="#a3a3a3" stroke-width="3.2" stroke-linecap="round" stroke-linejoin="round" /><circle cx="67.9" cy="456.9" r="3.4" fill="none" stroke="#a3a3a3" stroke-width="3"/><path d="M62.8 470.1A5.3 5.3 0 0 1 73.4 470.1" fill="none" stroke="#a3a3a3" stroke-width="3" stroke-linecap="round" stroke-linejoin="round" /><path d="M56.2 533.5H79.5A5 5 0 0 1 84.5 538.5V552.1A5 5 0 0 1 79.5 557.1H56.2A5 5 0 0 1 51.2 552.1V538.5A5 5 0 0 1 56.2 533.5Z M61.6 533.5V530.8A4 4 0 0 1 65.6 526.8H70.4A4 4 0 0 1 74.4 530.8V533.5 M61.6 544.4L66.4 549.2L74.1 541.5" fill="none" stroke="#a3a3a3" stroke-width="3.2" stroke-linecap="round" stroke-linejoin="round" /><circle cx="62.8" cy="613.5" r="6.9" fill="none" stroke="#a3a3a3" stroke-width="3.2"/><path d="M49.6 636V632.7A6 6 0 0 1 55.6 626.7H70.2A6 6 0 0 1 76.2 632.7V636 M73.7 606.8A7 7 0 0 1 73.7 620.4 M81.6 627.3A6 6 0 0 1 86.1 633V636" fill="none" stroke="#a3a3a3" stroke-width="3.2" stroke-linecap="round" stroke-linejoin="round" /><path d="M51.5 685.4H67.9L83.6 701.1A3 3 0 0 1 83.6 705.3L71.4 717.5A3 3 0 0 1 67.2 717.5L51.5 701.8Z" fill="none" stroke="#a3a3a3" stroke-width="3.2" stroke-linecap="round" stroke-linejoin="round" /><circle cx="59.7" cy="693.65" r="2.8" fill="none" stroke="#a3a3a3" stroke-width="3"/><g transform="translate(45.4,1661.2) scale(2.0)" fill="none" stroke="#a3a3a3" stroke-width="1.6" stroke-linecap="round" stroke-linejoin="round"><path d="M4 7h3a1 1 0 0 0 1-1v-1a2 2 0 0 1 4 0v1a1 1 0 0 0 1 1h3a1 1 0 0 1 1 1v3a1 1 0 0 0 1 1h1a2 2 0 0 1 0 4h-1a1 1 0 0 0-1 1v3a1 1 0 0 1-1 1h-3a1 1 0 0 1-1-1v-1a2 2 0 0 0-4 0v1a1 1 0 0 1-1 1h-3a1 1 0 0 1-1-1v-3a1 1 0 0 1 1-1h1a2 2 0 0 0 0-4h-1a1 1 0 0 1-1-1v-3a1 1 0 0 1 1-1"/></g><path d="M54.5 1774.7H76.5A3.5 3.5 0 0 1 80 1778.2V1791A3.5 3.5 0 0 1 76.5 1794.5H54.5A3.5 3.5 0 0 1 51 1791V1778.2A3.5 3.5 0 0 1 54.5 1774.7Z M51 1781.5H80" fill="none" stroke="#a3a3a3" stroke-width="3.2" stroke-linecap="round" stroke-linejoin="round" /><g fill="none" stroke="#ffffff" stroke-linecap="round" stroke-linejoin="round"><path d="M67.5 1872.3A13.8 13.8 0 1 1 55.8 1895.3A13.85 13.85 0 0 0 67.5 1872.3Z" stroke-width="2.5"/><path d="M55.3 1870.9v4.6M53 1873.2h4.6M61.6 1877.3v4.6M59.3 1879.6h4.6M53 1883.6v4.6M50.7 1885.9h4.6" stroke-width="1.8"/></g><g transform="translate(175.48,133.53) scale(1.3640)" style="color:#007339" fill="none" stroke="#007339" stroke-width="2.199" stroke-linecap="round" stroke-linejoin="round" ><circle cx="12" cy="12" r="10"/><path d="m9 12 2 2 4-4"/></g><g transform="translate(3230.80,133.60) scale(1.3500)" style="color:#007339" fill="none" stroke="#007339" stroke-width="2.000" stroke-linecap="round" stroke-linejoin="round" ><path d="M18 6 6 18"/><path d="m6 6 12 12"/></g><g transform="translate(195.32,241.67) scale(1.3900)" style="color:#ffffff" fill="none" stroke="#ffffff" stroke-width="1.942" stroke-linecap="round" stroke-linejoin="round" ><path d="m12 19-7-7 7-7"/><path d="M19 12H5"/></g><g transform="translate(285.66,241.86) scale(1.3450)" style="color:#ffffff" fill="none" stroke="#ffffff" stroke-width="2.007" stroke-linecap="round" stroke-linejoin="round" ><circle cx="12" cy="12" r="10"/><path d="M12 16v-4"/><path d="M12 8h.01"/></g><g transform="translate(375.62,241.87) scale(1.3650)" style="color:#ffffff" fill="none" stroke="#ffffff" stroke-width="1.978" stroke-linecap="round" stroke-linejoin="round" ><path d="M19 21v-2a4 4 0 0 0-4-4H9a4 4 0 0 0-4 4v2"/><circle cx="12" cy="7" r="4"/></g><g transform="translate(635.92,241.92) scale(1.3400)" style="color:#ffffff" fill="none" stroke="#ffffff" stroke-width="2.015" stroke-linecap="round" stroke-linejoin="round" ><circle cx="13.5" cy="6.5" r="1.5" fill="currentColor" stroke="none"/><circle cx="17.5" cy="10.5" r="1.5" fill="currentColor" stroke="none"/><circle cx="8.5" cy="7.5" r="1.5" fill="currentColor" stroke="none"/><circle cx="6.5" cy="12.5" r="1.5" fill="currentColor" stroke="none"/><path d="M12 2C6.5 2 2 6.5 2 12s4.5 10 10 10c.926 0 1.648-.746 1.648-1.688 0-.437-.18-.835-.437-1.125-.29-.289-.438-.652-.438-1.125a1.640 1.640 0 0 1 1.668-1.668h1.996c3.051 0 5.555-2.503 5.555-5.554C21.965 6.012 17.461 2 12 2z"/></g><g transform="translate(726.94,241.44) scale(1.3800)" style="color:#ffffff" fill="none" stroke="#ffffff" stroke-width="1.957" stroke-linecap="round" stroke-linejoin="round" ><circle cx="12" cy="12" r="10"/><circle cx="12" cy="12" r="6"/><circle cx="12" cy="12" r="2"/></g><g transform="translate(819.92,241.92) scale(1.3400)" style="color:#ffffff" fill="none" stroke="#ffffff" stroke-width="2.015" stroke-linecap="round" stroke-linejoin="round" ><polyline points="22 7 13.5 15.5 8.5 10.5 2 17"/><polyline points="16 7 22 7 22 13"/></g><g transform="translate(911.68,241.68) scale(1.3600)" style="color:#ffffff" fill="none" stroke="#ffffff" stroke-width="1.985" stroke-linecap="round" stroke-linejoin="round" ><path d="M15 2H6a2 2 0 0 0-2 2v16a2 2 0 0 0 2 2h12a2 2 0 0 0 2-2V7Z"/><path d="M14 2v4a2 2 0 0 0 2 2h4"/><path d="M10 9H8"/><path d="M16 13H8"/><path d="M16 17H8"/></g><g transform="translate(1348.68,242.18) scale(1.3180)" style="color:#ffffff" fill="none" stroke="#ffffff" stroke-width="2.049" stroke-linecap="round" stroke-linejoin="round" ><path d="M10 13a5 5 0 0 0 7.54.54l3-3a5 5 0 0 0-7.07-7.07l-1.72 1.71"/><path d="M14 11a5 5 0 0 0-7.54-.54l-3 3a5 5 0 0 0 7.07 7.07l1.71-1.71"/></g><g transform="translate(1730.07,241.32) scale(1.3900)" style="color:#ffffff" fill="none" stroke="#ffffff" stroke-width="1.942" stroke-linecap="round" stroke-linejoin="round" ><path d="m6 9 6 6 6-6"/></g><g transform="translate(1819.18,242.13) scale(1.3100)" style="color:#ffffff" fill="none" stroke="#ffffff" stroke-width="2.061" stroke-linecap="round" stroke-linejoin="round" ><path d="M21 15v4a2 2 0 0 1-2 2H5a2 2 0 0 1-2-2v-4"/><polyline points="7 10 12 15 17 10"/><line x1="12" x2="12" y1="15" y2="3"/></g><g transform="translate(1990.10,241.60) scale(1.3250)" style="color:#ffffff" fill="none" stroke="#ffffff" stroke-width="2.038" stroke-linecap="round" stroke-linejoin="round" ><path d="M21 15v4a2 2 0 0 1-2 2H5a2 2 0 0 1-2-2v-4"/><polyline points="17 8 12 3 7 8"/><line x1="12" x2="12" y1="3" y2="15"/></g><path d="M235.9 358L244.1 366.1L235.9 374.2" fill="none" stroke="#6e6e6e" stroke-width="2.3" stroke-linecap="round" stroke-linejoin="round" /><path d="M231.9 487.9L240.05 496.05L248.2 487.9" fill="none" stroke="#6e6e6e" stroke-width="2.3" stroke-linecap="round" stroke-linejoin="round" /><g transform="translate(1777.50,367.50) scale(1.3750)" style="color:#8a8a8a" fill="none" stroke="#8a8a8a" stroke-width="2.109" stroke-linecap="round" stroke-linejoin="round" ><path d="M5 12h14"/><path d="M12 5v14"/></g><g transform="translate(1858.13,367.88) scale(1.3350)" style="color:#8a8a8a" fill="none" stroke="#8a8a8a" stroke-width="1.873" stroke-linecap="round" stroke-linejoin="round" ><path d="m14.622 17.897-10.68-2.913"/><path d="M18.376 2.622a1 1 0 1 1 3.002 3.002L17.36 9.643a.5.5 0 0 0 0 .707l.944.944a2.410 2.410 0 0 1 0 3.408l-.944.944a.5.5 0 0 1-.707 0L8.354 7.348a.5.5 0 0 1 0-.707l.944-.944a2.410 2.410 0 0 1 3.408 0l.944.944a.5.5 0 0 0 .707 0z"/><path d="M9 8c-1.804 2.71-3.97 3.46-6.583 3.948a.507.507 0 0 0-.302.819l7.32 8.883a1 1 0 0 0 1.185.204C12.735 20.405 16 16.792 16 15"/></g><g transform="translate(1937.92,367.92) scale(1.3400)" style="color:#8a8a8a" fill="none" stroke="#8a8a8a" stroke-width="1.866" stroke-linecap="round" stroke-linejoin="round" ><line x1="21" x2="14" y1="4" y2="4"/><line x1="10" x2="3" y1="4" y2="4"/><line x1="21" x2="12" y1="12" y2="12"/><line x1="8" x2="3" y1="12" y2="12"/><line x1="21" x2="16" y1="20" y2="20"/><line x1="12" x2="3" y1="20" y2="20"/><line x1="14" x2="14" y1="2" y2="6"/><line x1="8" x2="8" y1="10" y2="14"/><line x1="16" x2="16" y1="18" y2="22"/></g><g transform="translate(1777.50,493.50) scale(1.3750)" style="color:#8a8a8a" fill="none" stroke="#8a8a8a" stroke-width="2.109" stroke-linecap="round" stroke-linejoin="round" ><path d="M5 12h14"/><path d="M12 5v14"/></g><g transform="translate(1858.13,493.88) scale(1.3350)" style="color:#8a8a8a" fill="none" stroke="#8a8a8a" stroke-width="1.873" stroke-linecap="round" stroke-linejoin="round" ><path d="m14.622 17.897-10.68-2.913"/><path d="M18.376 2.622a1 1 0 1 1 3.002 3.002L17.36 9.643a.5.5 0 0 0 0 .707l.944.944a2.410 2.410 0 0 1 0 3.408l-.944.944a.5.5 0 0 1-.707 0L8.354 7.348a.5.5 0 0 1 0-.707l.944-.944a2.410 2.410 0 0 1 3.408 0l.944.944a.5.5 0 0 0 .707 0z"/><path d="M9 8c-1.804 2.71-3.97 3.46-6.583 3.948a.507.507 0 0 0-.302.819l7.32 8.883a1 1 0 0 0 1.185.204C12.735 20.405 16 16.792 16 15"/></g><g transform="translate(1937.92,493.92) scale(1.3400)" style="color:#8a8a8a" fill="none" stroke="#8a8a8a" stroke-width="1.866" stroke-linecap="round" stroke-linejoin="round" ><line x1="21" x2="14" y1="4" y2="4"/><line x1="10" x2="3" y1="4" y2="4"/><line x1="21" x2="12" y1="12" y2="12"/><line x1="8" x2="3" y1="12" y2="12"/><line x1="21" x2="16" y1="20" y2="20"/><line x1="12" x2="3" y1="20" y2="20"/><line x1="14" x2="14" y1="2" y2="6"/><line x1="8" x2="8" y1="10" y2="14"/><line x1="16" x2="16" y1="18" y2="22"/></g><path d="M340.5 1178L346.4 1184.2L359.6 1170.6" fill="none" stroke="#ffffff" stroke-width="2.6" stroke-linecap="round" stroke-linejoin="round" /><g transform="translate(3215.86,273.96) scale(1.3370)" style="color:#ffffff" fill="none" stroke="#ffffff" stroke-width="2.094" stroke-linecap="round" stroke-linejoin="round" ><path d="M12.22 2h-.44a2 2 0 0 0-2 2v.18a2 2 0 0 1-1 1.73l-.43.25a2 2 0 0 1-2 0l-.15-.08a2 2 0 0 0-2.73.73l-.22.38a2 2 0 0 0 .73 2.73l.15.1a2 2 0 0 1 1 1.72v.51a2 2 0 0 1-1 1.74l-.15.09a2 2 0 0 0-.73 2.73l.22.38a2 2 0 0 0 2.73.73l.15-.08a2 2 0 0 1 2 0l.43.25a2 2 0 0 1 1 1.73V20a2 2 0 0 0 2 2h.44a2 2 0 0 0 2-2v-.18a2 2 0 0 1 1-1.73l.43-.25a2 2 0 0 1 2 0l.15.08a2 2 0 0 0 2.73-.73l.22-.39a2 2 0 0 0-.73-2.73l-.15-.08a2 2 0 0 1-1-1.74v-.5a2 2 0 0 1 1-1.74l.15-.09a2 2 0 0 0 .73-2.73l-.22-.38a2 2 0 0 0-2.73-.73l-.15.08a2 2 0 0 1-2 0l-.43-.25a2 2 0 0 1-1-1.73V4a2 2 0 0 0-2-2z"/><circle cx="12" cy="12" r="3"/></g><g transform="translate(3303.60,273.80) scale(1.3500)" style="color:#ffffff" fill="none" stroke="#ffffff" stroke-width="2.148" stroke-linecap="round" stroke-linejoin="round" ><path d="m21 21-6-6m6 6v-4.8m0 4.8h-4.8"/><path d="M3 16.2V21m0 0h4.8M3 21l6-6"/><path d="M21 7.8V3m0 0h-4.8M21 3l-6 6"/><path d="M3 7.8V3m0 0h4.8M3 3l6 6"/></g></svg>
</body></html>
